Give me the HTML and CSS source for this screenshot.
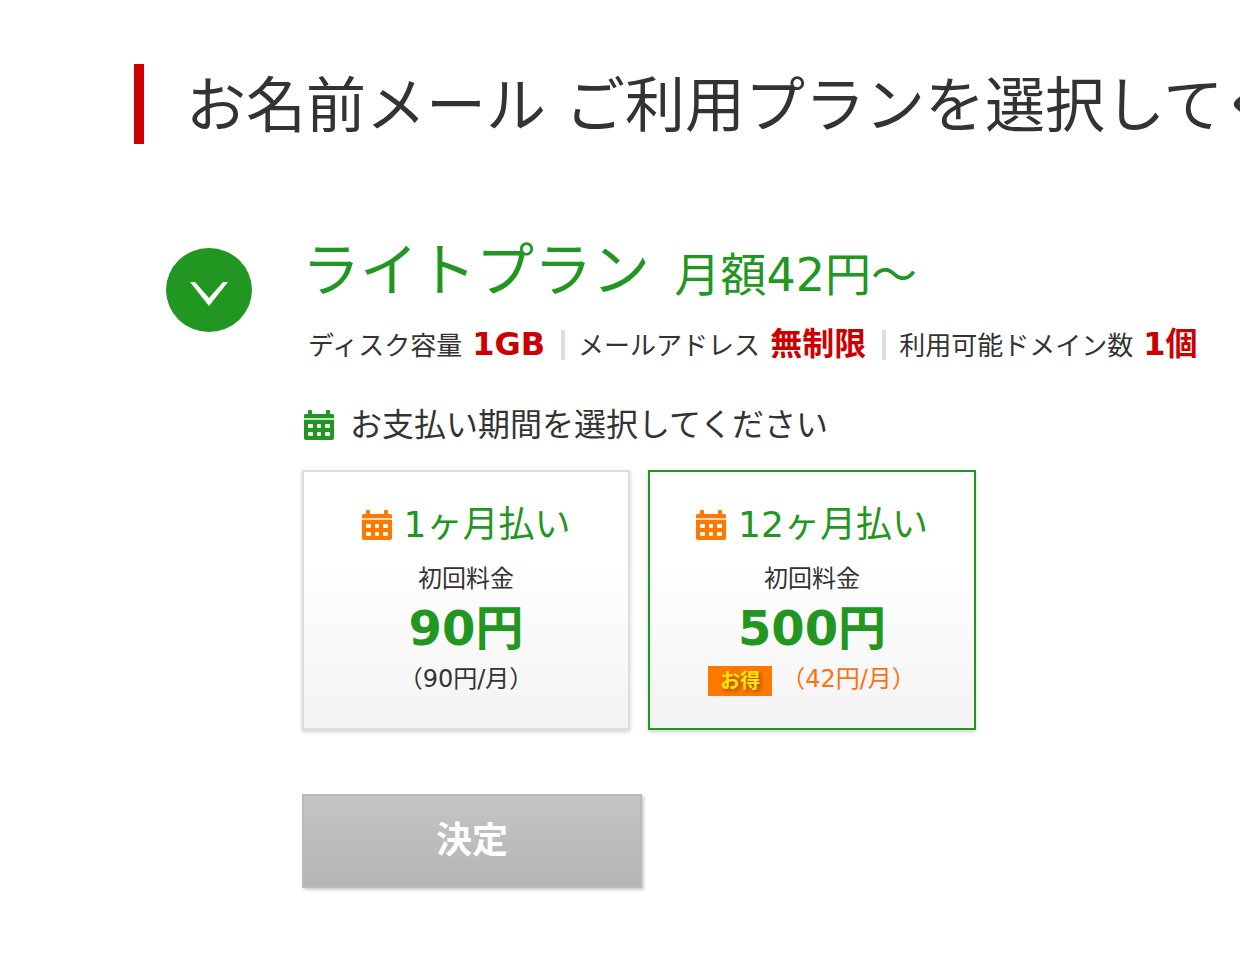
FILE: index.html
```
<!DOCTYPE html>
<html lang="ja">
<head>
    <meta charset="UTF-8">
    <meta name="viewport" content="width=device-width, initial-scale=1.0">
    <title>お名前メール ご利用プラン</title>
    <link rel="stylesheet" href="styles.css">
</head>
<body>

<!-- Calendar icon shared by the period heading and the cards -->
<svg class="defs" width="0" height="0" aria-hidden="true">
    <symbol id="calendar" viewBox="0 0 30 30">
        <path fill="currentColor" d="M0 5l1-1h3V1q0-1 1-1h2q1 0 1 1v3h14V1q0-1 1-1h2q1 0 1 1v3h3l1 1v3H0z"/>
        <path fill="currentColor" opacity="0.25" d="M0 8h30v2H0z"/>
        <path fill="currentColor" d="M0 10h30v18q0 2-2 2H2q-2 0-2-2z"/>
        <g fill="#fff">
            <rect x="4" y="14" width="5" height="4" rx="1"/>
            <rect x="13" y="14" width="4" height="4" rx="1"/>
            <rect x="21" y="14" width="5" height="4" rx="1"/>
            <rect x="4" y="22" width="5" height="4" rx="1"/>
            <rect x="13" y="22" width="4" height="4" rx="1"/>
            <rect x="21" y="22" width="5" height="4" rx="1"/>
        </g>
    </symbol>
</svg>

<main class="page">
    <h1 class="page-title">お名前メール ご利用プランを選択してください</h1>

    <section class="plan">
        <button type="button" class="plan-toggle" aria-label="ライトプラン">
            <svg viewBox="0 0 86 84" aria-hidden="true">
                <ellipse cx="43" cy="42" rx="43" ry="42" fill="#219621"/>
                <path d="M24 34H29L43 50L57 34H62L43 58Z" fill="#fff"/>
            </svg>
        </button>

        <form class="plan-body">
            <h2 class="plan-name">ライトプラン <span class="plan-price">月額42円〜</span></h2>

            <ul class="specs">
                <li>ディスク容量 <strong>1GB</strong></li>
                <li>メールアドレス <strong>無制限</strong></li>
                <li>利用可能ドメイン数 <strong>1個</strong></li>
            </ul>

            <h3 class="period-title">
                <svg class="icon" aria-hidden="true"><use href="#calendar"/></svg>
                お支払い期間を選択してください
            </h3>

            <div class="periods">
                <label class="card">
                    <input type="radio" name="period" value="1">
                    <span class="card-title"><svg class="icon" aria-hidden="true"><use href="#calendar"/></svg>1ヶ月払い</span>
                    <span class="card-label">初回料金</span>
                    <span class="card-price">90円</span>
                    <span class="card-monthly">（90円/月）</span>
                </label>
                <label class="card">
                    <input type="radio" name="period" value="12" checked>
                    <span class="card-title"><svg class="icon" aria-hidden="true"><use href="#calendar"/></svg>12ヶ月払い</span>
                    <span class="card-label">初回料金</span>
                    <span class="card-price">500円</span>
                    <span class="card-monthly deal"><b class="badge">お得</b>（42円/月）</span>
                </label>
            </div>

            <button type="button" class="submit">決定</button>
        </form>
    </section>
</main>

</body>
</html>
```
FILE: styles.css
```
* {
    box-sizing: border-box;
}
body {
    margin: 0;
    background: #fff;
    color: #333;
    font-family: "DejaVu Sans", "Noto Sans CJK JP", sans-serif;
    overflow-x: hidden;
}
h1, h2, h3, ul {
    margin: 0;
    padding: 0;
    font-weight: normal;
}
.defs {
    position: absolute;
}
.page {
    padding: 64px 0 80px 134px;
}
.page-title {
    border-left: 10px solid #c00;
    padding: 4px 0 0 42px;
    font-size: 60px;
    line-height: 76px;
    white-space: nowrap;
    overflow: hidden;
}

/* Plan */
.plan {
    display: flex;
    align-items: flex-start;
    gap: 50px;
    padding: 88px 0 0 32px;
}
.plan-toggle {
    flex: none;
    width: 86px;
    margin-top: 16px;
    padding: 0;
    border: none;
    background: none;
    cursor: pointer;
}
.plan-toggle svg {
    display: block;
    width: 100%;
}
.plan-name {
    color: #219621;
    font-size: 58px;
    line-height: 78px;
    white-space: nowrap;
}
.plan-price {
    margin-left: 6px;
    font-size: 46px;
}
.specs {
    display: flex;
    align-items: center;
    padding: 10px 0 0 6px;
    list-style: none;
    font-size: 26px;
    line-height: 40px;
    white-space: nowrap;
}
.specs li {
    display: flex;
    align-items: baseline;
    gap: 10px;
}
.specs li + li::before {
    content: "";
    align-self: center;
    width: 4px;
    height: 30px;
    margin: 0 3px 0 16px;
    background: #ddd;
}
.specs strong {
    color: #c00;
    font-size: 32px;
}
.period-title {
    display: flex;
    align-items: center;
    gap: 16px;
    padding: 34px 0 0 2px;
    font-size: 32px;
    line-height: 50px;
}
.icon {
    flex: none;
    width: 30px;
    height: 30px;
    color: #219621;
}

/* Payment period cards */
.periods {
    display: flex;
    gap: 18px;
    margin-top: 20px;
}
.card {
    display: flex;
    flex-direction: column;
    align-items: center;
    width: 328px;
    padding: 28px 0 26px;
    border: 2px solid #ddd;
    background: linear-gradient(#fff 35%, #f3f3f3);
    box-shadow: 0 2px 4px rgba(0, 0, 0, 0.18);
    cursor: pointer;
}
.card:has(input:checked) {
    border-color: #219621;
}
.card input {
    position: absolute;
    opacity: 0;
}
.card-title {
    display: flex;
    align-items: center;
    gap: 12px;
    color: #219621;
    font-size: 36px;
    line-height: 50px;
}
.card-title .icon {
    color: #ff7800;
}
.card-label {
    font-size: 24px;
    line-height: 58px;
}
.card-price {
    color: #219621;
    font-size: 48px;
    font-weight: bold;
    line-height: 40px;
}
.card-monthly {
    display: flex;
    align-items: center;
    gap: 9px;
    margin-top: 8px;
    font-size: 24px;
    line-height: 46px;
}
.deal {
    color: #ff7010;
}
.badge {
    margin-top: 4px;
    padding: 0 12px;
    background: #ff7800;
    color: #ffe400;
    font-size: 20px;
    line-height: 30px;
    text-shadow: 2px 2px 4px rgba(0, 0, 0, 0.4);
}

.submit {
    display: block;
    width: 340px;
    margin-top: 64px;
    padding: 0;
    border: 2px solid #bababa;
    background: linear-gradient(#c4c4c4, #b5b5b5);
    box-shadow: 2px 2px 3px rgba(0, 0, 0, 0.2);
    color: #fff;
    font-family: inherit;
    font-size: 36px;
    font-weight: bold;
    line-height: 90px;
    cursor: pointer;
}
```
